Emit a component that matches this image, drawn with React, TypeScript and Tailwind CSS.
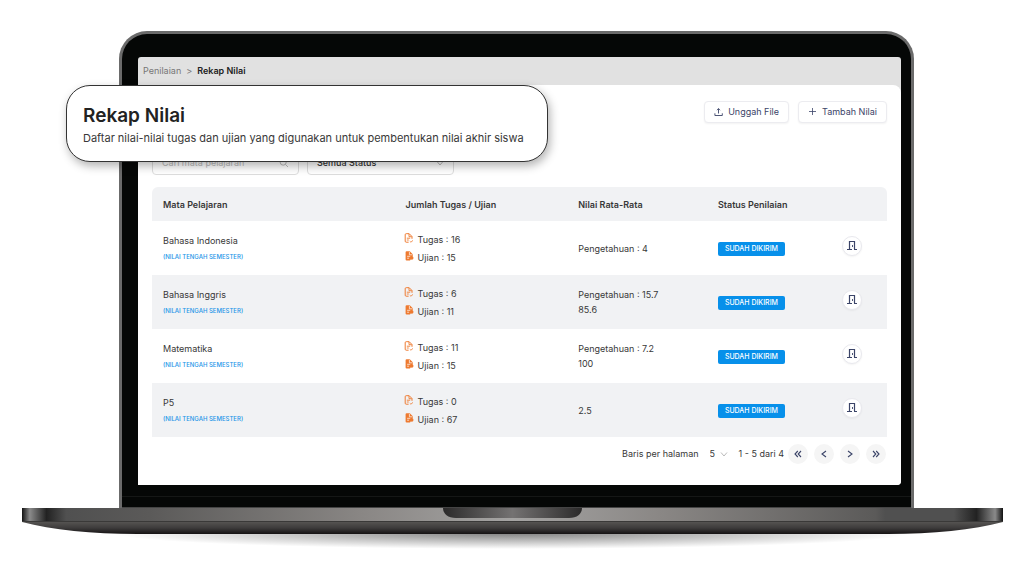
import { ReactNode, useState } from "react";

type Grade = {
    id: number;
    subject: string;
    assignments: number;
    exams: number;
    averages: string[];
};

const grades: Grade[] = [
    { id: 1, subject: "Bahasa Indonesia", assignments: 16, exams: 15, averages: ["Pengetahuan : 4"] },
    { id: 2, subject: "Bahasa Inggris", assignments: 6, exams: 11, averages: ["Pengetahuan : 15.7", "85.6"] },
    { id: 3, subject: "Matematika", assignments: 11, exams: 15, averages: ["Pengetahuan : 7.2", "100"] },
    { id: 4, subject: "P5", assignments: 0, exams: 67, averages: ["2.5"] },
];

const UploadIcon = () => (
    <svg viewBox="0 0 10 10" className="size-[10px]" fill="none" stroke="currentColor" aria-hidden="true">
        <path d="M4.5 6.5V1.6M3 3.2l1.5-1.6L6 3.2M.9 6.3v2.2h7.4V6.3" strokeWidth="0.9" />
    </svg>
);

const PlusIcon = () => (
    <svg viewBox="0 0 10 10" className="size-[10px]" fill="none" stroke="currentColor" aria-hidden="true">
        <path d="M4.5 1v7M1 4.5h7" strokeWidth="0.8" />
    </svg>
);

const SearchIcon = () => (
    <svg viewBox="0 0 10 10" className="size-[10px]" fill="none" stroke="currentColor" aria-hidden="true">
        <circle cx="4.2" cy="4.2" r="3" />
        <path d="M6.4 6.4L9 9" />
    </svg>
);

const DownIcon = () => (
    <svg viewBox="0 0 8 8" className="size-2" fill="none" stroke="currentColor" aria-hidden="true">
        <path d="M1 2.5L4 6l3-3.5" />
    </svg>
);

const AssignmentIcon = () => (
    <svg viewBox="0 0 10 10" className="mt-0.5 size-[10px] shrink-0 text-[#ee7a30]" fill="none" stroke="currentColor" aria-hidden="true">
        <path d="M4.6 9.2H2.2a1 1 0 0 1-1-1V1.7a1 1 0 0 1 1-1h3L8 3.5v2.3" />
        <path d="M5 .9v2.8h2.8M2.8 5.2h3.4M2.8 7h2" strokeWidth="0.9" />
        <path d="M5.8 8.2l1.1 1L9 7.4" strokeWidth="0.8" />
    </svg>
);

const ExamIcon = () => (
    <svg viewBox="0 0 10 10" className="mt-0.5 size-[10px] shrink-0 text-[#ee7a30]" fill="currentColor" aria-hidden="true">
        <path d="M2.6.3h3.2L8.8 3.3v2L6 9.6H2.6a1 1 0 0 1-1-1V1.3a1 1 0 0 1 1-1z" />
        <path d="M5.4.8v3h3M3.1 5.3h3.2M3.1 7.2h2" stroke="#fff" strokeWidth="0.7" fill="none" />
        <circle cx="7.8" cy="7" r="1.7" />
    </svg>
);

const DoorIcon = () => (
    <svg viewBox="0 0 12 12" className="size-3" fill="none" stroke="currentColor" aria-hidden="true">
        <path d="M3.5 9V1.5h5V9" strokeWidth="1.2" />
        <path d="M1 9.5h5M8 9.5h3" strokeWidth="1.2" />
        <path d="M6.5 5v2" strokeWidth="0.9" />
    </svg>
);

const PageButton = ({ label, path }: { label: string; path: string }) => (
    <button
        type="button"
        aria-label={label}
        className="flex size-5 items-center justify-center rounded-full bg-[#f5f5f5] text-[#3b4468]"
    >
        <svg viewBox="0 0 10 10" className="size-[10px]" fill="none" stroke="currentColor" strokeWidth="1.1">
            <path d={path} />
        </svg>
    </button>
);

const HeaderButton = ({ children }: { children: ReactNode }) => (
    <button
        type="button"
        className="flex h-[22px] items-center gap-1 rounded border border-[#ececf0] bg-white px-[9px] text-[9px] text-[#3b4468] shadow-xs"
    >
        {children}
    </button>
);

const LaptopBase = () => (
    <svg viewBox="0 0 981 44" preserveAspectRatio="none" className="block h-11 w-full" aria-hidden="true">
        <defs>
            <linearGradient id="deck">
                <stop offset="0" stopColor="#111" />
                <stop offset="0.008" stopColor="#8a8a8a" />
                <stop offset="0.025" stopColor="#222" />
                <stop offset="0.045" stopColor="#505050" />
                <stop offset="0.13" stopColor="#5b5a59" />
                <stop offset="0.35" stopColor="#8a8785" />
                <stop offset="0.5" stopColor="#a5a4a3" />
                <stop offset="0.65" stopColor="#8a8785" />
                <stop offset="0.87" stopColor="#5b5a59" />
                <stop offset="0.88" stopColor="#505050" />
                <stop offset="0.95" stopColor="#505050" />
                <stop offset="0.973" stopColor="#222" />
                <stop offset="0.992" stopColor="#8a8a8a" />
                <stop offset="1" stopColor="#111" />
            </linearGradient>
            <linearGradient id="under" x2="0" y2="1">
                <stop offset="0" stopColor="#555351" />
                <stop offset="0.5" stopColor="#3d3b3b" />
                <stop offset="1" stopColor="#151213" />
            </linearGradient>
            <linearGradient id="notch">
                <stop offset="0" stopColor="#2b2a2a" />
                <stop offset="0.5" stopColor="#747272" />
                <stop offset="1" stopColor="#2b2a2a" />
            </linearGradient>
            <radialGradient id="floor">
                <stop offset="0" stopColor="#000" stopOpacity="0.5" />
                <stop offset="1" stopColor="#000" stopOpacity="0" />
            </radialGradient>
        </defs>
        <ellipse cx="490" cy="25" rx="400" ry="16" fill="url(#floor)" />
        <path d="M0 14h981c-30 8-70 12-115 12H115C70 26 30 22 0 14z" fill="url(#under)" />
        <path d="M0 0h981v14H0z" fill="url(#deck)" />
        <path d="M0 13.5h981" stroke="#3a3938" />
        <path d="M421 0h139c0 6-5 10-13 10H434c-8 0-13-4-13-10z" fill="url(#notch)" />
    </svg>
);

export default function App() {
    const [search, setSearch] = useState("");
    const [status, setStatus] = useState("");
    const [perPage, setPerPage] = useState("5");

    const rows = grades.filter((grade) => grade.subject.toLowerCase().includes(search.toLowerCase()));

    return (
        <div className="min-h-screen overflow-x-hidden bg-white pt-[31px] pr-[21px] pl-[22px] font-[Inter,Roboto,sans-serif] text-[#383838]">
            {/* Laptop lid */}
            <div className="mr-[89px] ml-[97px] rounded-t-[28px] border-x-[3px] border-t-[3px] border-[#6b6b6b] bg-[#050706] pt-[23px] pr-[10px] pl-4">
                <div className="relative rounded-t-[3px] rounded-br bg-[#e1e1e1]">
                    <nav aria-label="Breadcrumb" className="flex h-7 items-center gap-[5px] px-[5px] text-[9px]">
                        <a href="#penilaian" className="text-[#777]">Penilaian</a>
                        <span className="text-[#777]">&gt;</span>
                        <span className="font-semibold text-[#222]">Rekap Nilai</span>
                    </nav>

                    <main className="rounded-tr-lg rounded-br bg-white px-[14px] pt-4 pb-[21px]">
                        <div className="flex justify-end gap-[9px]">
                            <HeaderButton>
                                <UploadIcon />
                                Unggah File
                            </HeaderButton>
                            <HeaderButton>
                                <PlusIcon />
                                Tambah Nilai
                            </HeaderButton>
                        </div>

                        {/* Filters */}
                        <div className="mt-7 flex gap-2">
                            <label className="flex h-6 w-[147px] items-center rounded border border-[#ddd] px-[9px] text-[#bbb]">
                                <input
                                    type="text"
                                    aria-label="Cari mata pelajaran"
                                    placeholder="Cari mata pelajaran"
                                    value={search}
                                    onChange={(e) => setSearch(e.target.value)}
                                    className="min-w-0 flex-1 text-[9px] text-[#333] outline-none placeholder:text-[#bbb]"
                                />
                                <SearchIcon />
                            </label>
                            <label className="flex h-6 w-[147px] items-center rounded border border-[#ddd] px-[9px] text-[#bbb]">
                                <select
                                    aria-label="Status"
                                    value={status}
                                    onChange={(e) => setStatus(e.target.value)}
                                    className="min-w-0 flex-1 appearance-none text-[9px] font-medium text-[#333] outline-none"
                                >
                                    <option value="">Semua Status</option>
                                    <option value="sent">Sudah Dikirim</option>
                                </select>
                                <DownIcon />
                            </label>
                        </div>

                        <table className="mt-3 w-full table-fixed text-left text-[9px]">
                            <thead>
                                <tr className="h-[34px]">
                                    <th className="w-[33%] rounded-tl-md bg-[#f1f2f4] px-[11px] pt-0.5 font-semibold">Mata Pelajaran</th>
                                    <th className="w-[23.5%] bg-[#f1f2f4] px-[11px] pt-0.5 font-semibold">Jumlah Tugas / Ujian</th>
                                    <th className="w-[19%] bg-[#f1f2f4] px-[11px] pt-0.5 font-semibold">Nilai Rata-Rata</th>
                                    <th className="w-[15%] bg-[#f1f2f4] px-[11px] pt-0.5 font-semibold">Status Penilaian</th>
                                    <th className="w-[9.5%] rounded-tr-md bg-[#f1f2f4]" aria-label="Aksi"></th>
                                </tr>
                            </thead>
                            <tbody>
                                {rows.map((grade) => (
                                    <tr key={grade.id} className="h-[54px] even:bg-[#f1f2f4]">
                                        <td className="px-[11px] pt-0.5">
                                            <p className="leading-4">{grade.subject}</p>
                                            <p className="text-[6px] leading-4 font-medium text-[#1c95e8]">(NILAI TENGAH SEMESTER)</p>
                                        </td>
                                        <td className="px-[9px] pt-0.5">
                                            <p className="flex items-start gap-1 leading-[18px]">
                                                <AssignmentIcon />
                                                Tugas : {grade.assignments}
                                            </p>
                                            <p className="flex items-start gap-1 leading-[18px]">
                                                <ExamIcon />
                                                Ujian : {grade.exams}
                                            </p>
                                        </td>
                                        <td className="px-[11px]">
                                            {grade.averages.map((average) => (
                                                <p key={average} className="leading-[15px]">{average}</p>
                                            ))}
                                        </td>
                                        <td className="px-[11px] pt-0.5">
                                            <span className="flex h-[14px] w-[67px] items-center justify-center rounded-xs bg-[#0790ea] text-[7px] font-medium text-white">
                                                SUDAH DIKIRIM
                                            </span>
                                        </td>
                                        <td>
                                            <button
                                                type="button"
                                                aria-label={`Buka ${grade.subject}`}
                                                className="mx-auto mb-1 flex size-5 items-center justify-center rounded-full border border-[#e9e9ee] bg-white text-[#3b4468] shadow-xs"
                                            >
                                                <DoorIcon />
                                            </button>
                                        </td>
                                    </tr>
                                ))}
                            </tbody>
                        </table>

                        {/* Pagination */}
                        <div className="mt-[7px] flex items-center justify-end pr-px text-[9px]">
                            <label htmlFor="per-page">Baris per halaman</label>
                            <select
                                id="per-page"
                                value={perPage}
                                onChange={(e) => setPerPage(e.target.value)}
                                className="ml-[11px] w-[10px] appearance-none outline-none"
                            >
                                <option>5</option>
                                <option>10</option>
                            </select>
                            <span className="text-[#bbb]"><DownIcon /></span>
                            <span className="mr-1 ml-[11px]">1 - 5 dari 4</span>
                            <div className="flex gap-1.5">
                                <PageButton label="Halaman pertama" path="M4.8 2L2 5l2.8 3M8 2L5.2 5 8 8" />
                                <PageButton label="Halaman sebelumnya" path="M7 2L3 5l4 3" />
                                <PageButton label="Halaman berikutnya" path="M3 2l4 3-4 3" />
                                <PageButton label="Halaman terakhir" path="M2 2l2.8 3L2 8M5.2 2L8 5 5.2 8" />
                            </div>
                        </div>
                    </main>

                    {/* Title callout */}
                    <header className="absolute top-7 -left-[72px] rounded-[24px] border border-[#333] bg-white pt-[17px] pr-[23px] pb-[14px] pl-4 shadow-[2px_4px_10px_rgba(0,0,0,0.3)]">
                        <h1 className="text-[19px] leading-[26px] font-semibold text-[#222]">Rekap Nilai</h1>
                        <p className="text-[11px] leading-[18px]">
                            Daftar nilai-nilai tugas dan ujian yang digunakan untuk pembentukan nilai akhir siswa
                        </p>
                    </header>
                </div>
                <div className="h-[11px]"></div>
                <div className="-mr-[10px] -ml-4 h-3 border-t border-b border-t-[#151716] border-b-[#444]"></div>
            </div>
            <LaptopBase />
        </div>
    );
}
